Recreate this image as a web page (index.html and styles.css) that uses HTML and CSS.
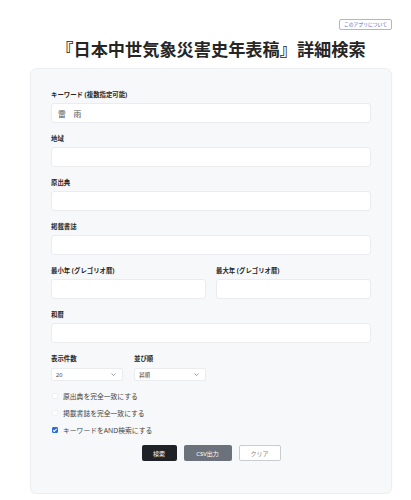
FILE: index.html
```html
<!DOCTYPE html>
<html lang="ja">
  <head>
    <meta charset="utf-8">
    <meta name="viewport" content="width=device-width, initial-scale=1">
    <title>詳細検索</title>
    <link rel="stylesheet" href="styles.css">
  </head>
  <body>
    <div class="page">
      <div class="top-bar">
        <button class="about-button" type="button">このアプリについて</button>
      </div>
      <h1 class="title">『日本中世気象災害史年表稿』詳細検索</h1>

      <!-- search form -->
      <form class="search-card" onsubmit="return false">
        <div class="field">
          <label class="field-label">キーワード (複数指定可能)</label>
          <input class="text-input keyword" type="text" value="雷　雨">
        </div>
        <div class="field">
          <label class="field-label">地域</label>
          <input class="text-input" type="text">
        </div>
        <div class="field">
          <label class="field-label">原出典</label>
          <input class="text-input" type="text">
        </div>
        <div class="field">
          <label class="field-label">掲載書誌</label>
          <input class="text-input" type="text">
        </div>
        <div class="field-row">
          <div class="field">
            <label class="field-label">最小年 (グレゴリオ暦)</label>
            <input class="text-input" type="text">
          </div>
          <div class="field">
            <label class="field-label">最大年 (グレゴリオ暦)</label>
            <input class="text-input" type="text">
          </div>
        </div>
        <div class="field">
          <label class="field-label">和暦</label>
          <input class="text-input" type="text">
        </div>

        <div class="select-row">
          <div class="select-field">
            <label class="field-label">表示件数</label>
            <div class="select-wrap">
              <select class="select-input">
                <option>20</option>
                <option>50</option>
                <option>100</option>
              </select>
              <svg class="chevron" viewBox="0 0 10 6" width="5" height="3"><path d="M1 1l4 4 4-4" fill="none" stroke="#777" stroke-width="1.4"/></svg>
            </div>
          </div>
          <div class="select-field">
            <label class="field-label">並び順</label>
            <div class="select-wrap">
              <select class="select-input">
                <option>昇順</option>
                <option>降順</option>
              </select>
              <svg class="chevron" viewBox="0 0 10 6" width="5" height="3"><path d="M1 1l4 4 4-4" fill="none" stroke="#777" stroke-width="1.4"/></svg>
            </div>
          </div>
        </div>

        <div class="checks">
          <label class="check"><input type="checkbox"><span>原出典を完全一致にする</span></label>
          <label class="check"><input type="checkbox"><span>掲載書誌を完全一致にする</span></label>
          <label class="check"><input type="checkbox" checked><span>キーワードをAND検索にする</span></label>
        </div>

        <div class="buttons">
          <button class="btn btn-search" type="submit">検索</button>
          <button class="btn btn-csv" type="button">CSV出力</button>
          <button class="btn btn-clear" type="reset">クリア</button>
        </div>
      </form>
    </div>
  </body>
</html>
```
FILE: styles.css
```css
/* base */
body {
    margin: 0;
    background-color: #ffffff;
    font-family: "Noto Sans", "Noto Sans CJK JP", sans-serif;
    color: #222;
}

.page {
    width: 362px;
    margin-left: 30px;
    padding-top: 19px;
}

.top-bar {
    display: flex;
    justify-content: flex-end;
}

.about-button {
    height: 11px;
    padding: 0 4px;
    font-family: inherit;
    font-size: 4.8px;
    line-height: 9px;
    color: #4a5cc8;
    background-color: #ffffff;
    border: 1px solid #a9b3e8;
    border-radius: 2px;
}

.title {
    margin: 9px 0 7px 0;
    font-size: 17.2px;
    line-height: 22px;
    font-weight: 700;
    text-align: center;
    color: #262626;
}

/* card */
.search-card {
    background-color: #f7f8fa;
    border: 1px solid #eceef1;
    border-radius: 7px;
    box-shadow: 0 1px 2px rgba(0, 0, 0, 0.04);
    padding: 21px 20px 32px 20px;
}

.field {
    display: flex;
    flex-direction: column;
    margin-bottom: 11px;
}

.field-row {
    display: grid;
    grid-template-columns: 1fr 1fr;
    column-gap: 10px;
}

.field-label {
    font-size: 6.4px;
    line-height: 9px;
    font-weight: 700;
    color: #262626;
    margin-bottom: 4px;
}

.text-input {
    box-sizing: border-box;
    height: 20px;
    width: 100%;
    padding: 0 6px;
    background-color: #ffffff;
    border: 1px solid #eaecef;
    border-radius: 3px;
    font-family: inherit;
    font-size: 7.8px;
    color: #555;
    outline: none;
}

/* selects */
.select-row {
    display: flex;
    gap: 11px;
}

.select-field {
    display: flex;
    flex-direction: column;
}

.select-wrap {
    position: relative;
    height: 13px;
    margin-top: 1px;
}

.select-input {
    display: block;
    appearance: none;
    box-sizing: border-box;
    width: 72px;
    height: 13px;
    padding: 0 4px;
    background-color: #ffffff;
    border: 1px solid #eaecef;
    border-radius: 2px;
    font-family: inherit;
    font-size: 5.6px;
    color: #444;
    outline: none;
}

.chevron {
    position: absolute;
    right: 7px;
    top: 5px;
}

/* checkboxes */
.checks {
    display: flex;
    flex-direction: column;
    gap: 6px;
    margin-top: 9px;
}

.check {
    display: flex;
    align-items: center;
    height: 11px;
    font-size: 6.8px;
    color: #444;
}

.check input {
    appearance: none;
    box-sizing: border-box;
    width: 6px;
    height: 6px;
    margin: 0 5px 0 1px;
    background-color: #ffffff;
    border: 1px solid #eef0f2;
    border-radius: 1px;
}

.check input:checked {
    background-color: #2e6fd9;
    border-color: #2e6fd9;
    position: relative;
}

.check input:checked::after {
    content: "";
    position: absolute;
    left: 1.3px;
    top: 0.2px;
    width: 1.4px;
    height: 2.8px;
    border: solid #ffffff;
    border-width: 0 1px 1px 0;
    transform: rotate(45deg);
}

/* buttons */
.buttons {
    display: flex;
    justify-content: center;
    gap: 7px;
    margin-top: 10px;
}

.btn {
    height: 16px;
    padding: 0;
    font-family: inherit;
    font-size: 6px;
    border-radius: 2px;
    cursor: pointer;
}

.btn-search {
    width: 35px;
    background-color: #1e2227;
    color: #ffffff;
    border: none;
}

.btn-csv {
    width: 48px;
    background-color: #6b727c;
    color: #ffffff;
    border: none;
}

.btn-clear {
    width: 42px;
    background-color: #ffffff;
    color: #888;
    border: 1px solid #c9ccd0;
}
```
